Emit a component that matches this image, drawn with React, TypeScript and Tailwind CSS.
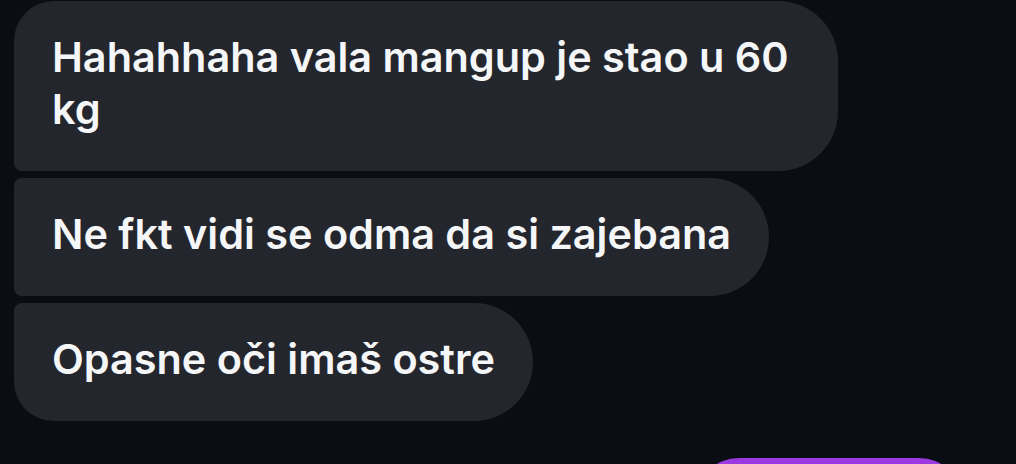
import React from 'react';

type Msg = { text: string; corners: string };

const messages: Msg[] = [
  { text: 'Hahahhaha vala mangup je stao u 60 kg', corners: 'rounded-tl-[40px] rounded-bl-[8px]' },
  { text: 'Ne fkt vidi se odma da si zajebana', corners: 'rounded-tl-[8px] rounded-bl-[8px]' },
  { text: 'Opasne oči imaš ostre', corners: 'rounded-tl-[8px] rounded-bl-[40px]' },
];

const Bubble: React.FC<{ msg: Msg }> = ({ msg }) => {
  return (
    <div
      className={`max-w-[824px] w-fit bg-[#24262d] text-[#f5f6f8] px-[38px] pt-[30px] pb-[36px] rounded-r-[60px] ${msg.corners}`}
    >
      <p className="text-[41.4px] leading-[52px] font-semibold">{msg.text}</p>
    </div>
  );
};

const App: React.FC = () => {
  return (
    <div
      className="w-[1016px] h-[464px] overflow-hidden bg-[#0b0d14] pt-[1px] pl-[14px] flex flex-col"
      style={{ fontFamily: 'Inter, "Noto Sans", sans-serif' }}
    >
      <div className="flex flex-col gap-[7px]">
        {messages.map((m, i) => (
          <Bubble key={i} msg={m} />
        ))}
      </div>
      <div className="flex justify-end pr-[53px] mt-[37px]">
        <div className="w-[268px] h-[80px] shrink-0 bg-[#9a3ae0] rounded-t-[44px]" />
      </div>
    </div>
  );
};

export default App;
